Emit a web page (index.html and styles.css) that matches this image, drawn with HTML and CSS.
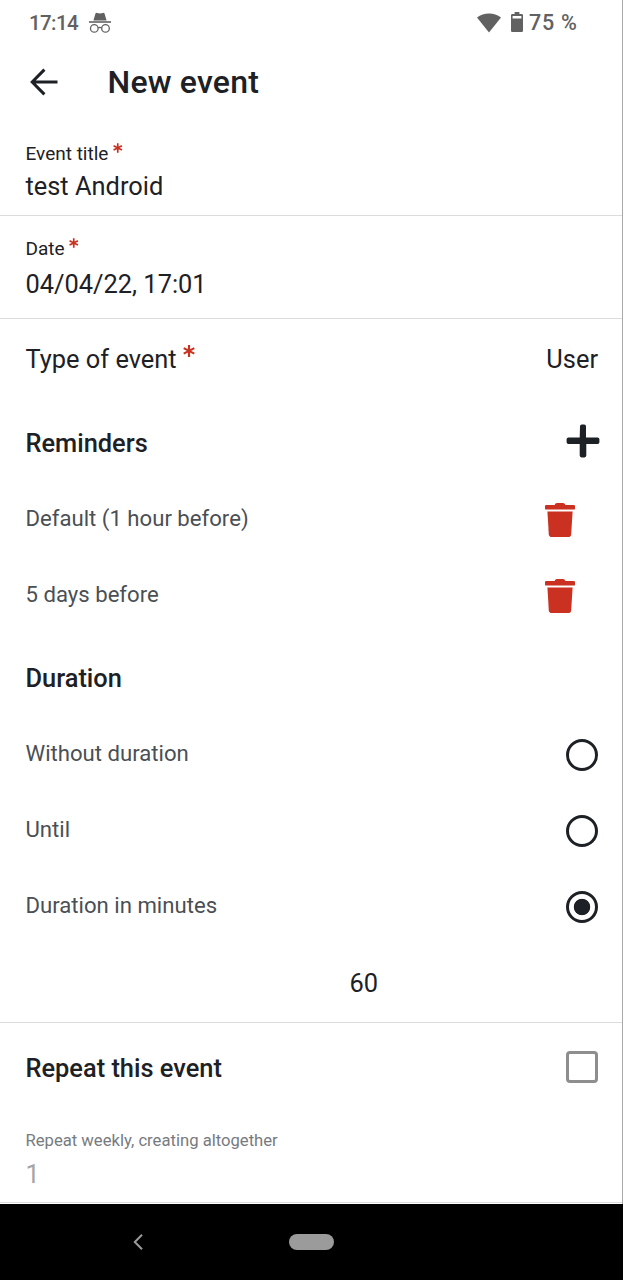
FILE: index.html
```html
<!DOCTYPE html>
<html lang="en">

<head>
    <meta charset="UTF-8">
    <meta name="viewport" content="width=device-width, initial-scale=1.0">
    <title>New event</title>
    <link rel="stylesheet" href="styles.css">
</head>

<body>
    <div class="screen">
        <div class="statusBar">
            <span class="statusText clock">17:14</span>
            <svg class="incognito" width="22" height="22" viewBox="0 0 22 22">
                <path d="M4.4 8.4 L6.4 1.8 Q6.8 .6 8 .9 L11 1.6 L14 .9 Q15.2 .6 15.6 1.8 L17.6 8.4 Z" fill="#616161"/>
                <path d="M0 10 H22" stroke="#616161" stroke-width="1.6"/>
                <g fill="none" stroke="#616161" stroke-width="1.3">
                    <circle cx="5.3" cy="16.4" r="3.8"/>
                    <circle cx="16.5" cy="16.4" r="3.8"/>
                    <path d="M9.1 16 Q10.9 14.8 12.7 16"/>
                </g>
            </svg>
            <svg class="wifi" width="24" height="20" viewBox="0 0 24 20">
                <path d="M0 4.6 Q5.2 .4 12 .4 T24 4.6 L12 19.6 Z" fill="#616161"/>
            </svg>
            <svg class="battery" width="12" height="20" viewBox="0 0 12 20">
                <path d="M3.6 0 H8.4 V2 H10.8 Q12 2 12 3.2 V18.8 Q12 20 10.8 20 H1.2 Q0 20 0 18.8 V3.2 Q0 2 1.2 2 H3.6 Z M1.6 4 V6.6 H10.4 V4 Z" fill="#616161" fill-rule="evenodd"/>
            </svg>
            <span class="statusText percent">75 %</span>
        </div>

        <header class="toolbar">
            <svg width="28" height="28" viewBox="0 0 28 28">
                <path d="M27.5 14 H2.5 M14.4 1.6 L2.2 14 L14.4 26.4" fill="none" stroke="#1d2125" stroke-width="3"/>
            </svg>
            <h1>New event</h1>
        </header>

        <div class="field titleField">
            <div class="label">Event title<svg class="required" viewBox="0 0 10 10"><path d="M5 0 V10 M.6 2.6 L9.4 7.2 M9.4 2.6 L.6 7.2"/></svg></div>
            <div class="value">test Android</div>
        </div>

        <div class="field dateField">
            <div class="label">Date<svg class="required" viewBox="0 0 10 10"><path d="M5 0 V10 M.6 2.6 L9.4 7.2 M9.4 2.6 L.6 7.2"/></svg></div>
            <div class="value">04/04/22, 17:01</div>
        </div>

        <div class="row typeRow">
            <div class="value">Type of event<svg class="required requiredBig" viewBox="0 0 10 10"><path d="M5 0 V10 M.6 2.6 L9.4 7.2 M9.4 2.6 L.6 7.2"/></svg></div>
            <div class="value">User</div>
        </div>

        <div class="row headingRow">
            <h2>Reminders</h2>
            <svg class="plus" width="34" height="34" viewBox="0 0 34 34">
                <path d="M14 2.4 Q14 .6 15.8 .6 H18.2 Q20 .6 20 2.4 V13.5 H31.6 Q33.4 13.5 33.4 15.3 V18.3 Q33.4 20.1 31.6 20.1 H20.3 V31.6 Q20.3 33.4 18.5 33.4 H15.5 Q13.7 33.4 13.7 31.6 V20.1 H2.4 Q.6 20.1 .6 18.3 V15.3 Q.6 13.5 2.4 13.5 H13.7 Z" fill="#1d2125"/>
            </svg>
        </div>
        <div class="row">
            <span class="text">Default (1 hour before)</span>
            <svg class="trash" width="30" height="34" viewBox="0 0 30 34">
                <path d="M1.2 2 H9.6 Q10.2 0 12 0 H18 Q19.8 0 20.4 2 H28.8 Q30 2 30 3.2 V5.4 Q30 6.6 28.8 6.6 H1.2 Q0 6.6 0 5.4 V3.2 Q0 2 1.2 2 Z"/>
                <path d="M2.4 8.6 H27.6 L26.2 31.2 Q26 34 23.2 34 H6.8 Q4 34 3.8 31.2 Z"/>
            </svg>
        </div>
        <div class="row">
            <span class="text">5 days before</span>
            <svg class="trash" width="30" height="34" viewBox="0 0 30 34">
                <path d="M1.2 2 H9.6 Q10.2 0 12 0 H18 Q19.8 0 20.4 2 H28.8 Q30 2 30 3.2 V5.4 Q30 6.6 28.8 6.6 H1.2 Q0 6.6 0 5.4 V3.2 Q0 2 1.2 2 Z"/>
                <path d="M2.4 8.6 H27.6 L26.2 31.2 Q26 34 23.2 34 H6.8 Q4 34 3.8 31.2 Z"/>
            </svg>
        </div>

        <div class="row headingRow durationRow">
            <h2>Duration</h2>
        </div>
        <div class="row">
            <span class="text">Without duration</span>
            <span class="radio"></span>
        </div>
        <div class="row">
            <span class="text">Until</span>
            <span class="radio"></span>
        </div>
        <div class="row">
            <span class="text">Duration in minutes</span>
            <span class="radio radioChecked"></span>
        </div>
        <div class="minutes value">60</div>

        <div class="row repeatRow">
            <h2>Repeat this event</h2>
            <span class="checkbox"></span>
        </div>
        <div class="field repeatField">
            <div class="smallLabel">Repeat weekly, creating altogether</div>
            <div class="value disabled">1</div>
        </div>
    </div>

    <div class="navBar">
        <svg width="10" height="16" viewBox="0 0 10 16">
            <path d="M9 .8 L1.8 8 L9 15.2" fill="none" stroke="#9b9b9b" stroke-width="2"/>
        </svg>
        <span class="homePill"></span>
    </div>
</body>

</html>
```
FILE: styles.css
```css
* {
    box-sizing: border-box;
}

body {
    margin: 0;
    background: #fff;
    color: #1d2125;
    font-family: 'Roboto', sans-serif;
}

h1, h2 {
    margin: 0;
    font-weight: 500;
}

svg {
    display: block;
    flex: none;
}

.screen {
    height: 1204px;
    border-right: 1px solid #a9a9a9;
    overflow: hidden;
}

.statusBar {
    display: flex;
    align-items: center;
    height: 45px;
    padding: 0 44px 0 29px;
    color: #616161;
}

.statusText {
    font-size: 20.5px;
    font-weight: 500;
    line-height: 24px;
}

.clock {
    width: 49px;
    letter-spacing: -0.6px;
}

.percent {
    width: 49px;
    font-size: 21.5px;
    letter-spacing: 0.7px;
    white-space: nowrap;
}

.incognito {
    margin-left: 11px;
}

.wifi {
    margin-left: auto;
}

.battery {
    margin: 0 6px 1px 10px;
}

.toolbar {
    display: flex;
    align-items: center;
    height: 74px;
    padding-left: 30px;
}

.toolbar h1 {
    margin-left: 49.5px;
    font-size: 32px;
    line-height: 40px;
    letter-spacing: 0.2px;
}

.field {
    padding-left: 25.5px;
    border-bottom: 1px solid #dcdcdc;
}

.titleField {
    height: 97px;
    padding-top: 23px;
}

.dateField {
    height: 103px;
    padding-top: 21px;
}

.label {
    display: flex;
    font-size: 19px;
    line-height: 24px;
}

.value {
    font-size: 25.4px;
    line-height: 32px;
}

.titleField .value {
    margin-top: 4px;
}

.dateField .value {
    margin-top: 7px;
}

.required {
    width: 9.5px;
    height: 10px;
    margin: 1px 0 0 4.5px;
    stroke: #ca3120;
    stroke-width: 1.8;
    overflow: visible;
}

.requiredBig {
    width: 12px;
    height: 12px;
    margin: 2px 0 0 6.5px;
}

.row {
    display: flex;
    align-items: center;
    justify-content: space-between;
    height: 76px;
    padding: 0 24px 0 25.5px;
}

.typeRow {
    height: 84px;
    padding-bottom: 4px;
}

.typeRow .value {
    display: flex;
}

.headingRow {
    height: 78px;
    padding-top: 2px;
}

.durationRow {
    height: 83px;
    padding-top: 6px;
}

h2 {
    font-size: 25.4px;
    line-height: 32px;
}

.plus {
    margin: -4px -2px 0 0;
}

.text {
    margin-bottom: 2px;
    color: #4a4f54;
    font-size: 22.15px;
    line-height: 28px;
}

.trash {
    margin: 2px 23px 0 0;
    fill: #ca3120;
}

.radio {
    width: 32px;
    height: 32px;
    margin-top: 2px;
    border: 3px solid #1d2125;
    border-radius: 50%;
}

.radioChecked {
    background: radial-gradient(circle, #1d2125 7.8px, transparent 8.6px);
}

.minutes {
    height: 79px;
    padding: 23px 0 0 349.5px;
    border-bottom: 1px solid #dcdcdc;
}

.repeatRow {
    height: 88px;
}

.repeatRow h2 {
    margin-top: 2px;
}

.checkbox {
    width: 32px;
    height: 32px;
    border: 3px solid #8e8e8e;
    border-radius: 4px;
}

.repeatField {
    height: 92px;
    padding-top: 19px;
}

.smallLabel {
    color: #777b7f;
    font-size: 16.65px;
    line-height: 22px;
}

.disabled {
    margin-top: 6px;
    color: #a5a5a5;
}

.navBar {
    display: flex;
    align-items: center;
    height: 76px;
    padding-left: 133px;
    background: #000;
}

.homePill {
    width: 45px;
    height: 16px;
    margin-left: 146px;
    border-radius: 8px;
    background: #9b9b9b;
}
```
